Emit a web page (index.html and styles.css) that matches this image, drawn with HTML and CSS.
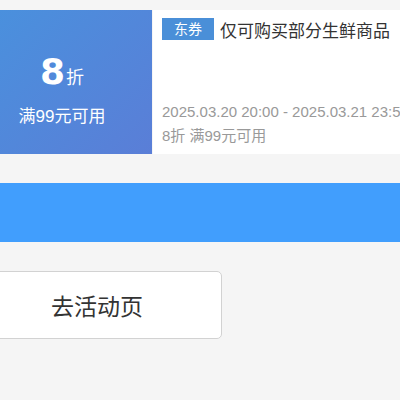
FILE: index.html
```html
<!DOCTYPE html>
<html lang="zh-CN">
<head>
  <meta charset="UTF-8">
  <meta name="viewport" content="width=device-width, initial-scale=1.0">
  <title>优惠券</title>
  <link rel="stylesheet" href="styles.css">
</head>
<body>
  <div class="coupon">
    <div class="coupon-left">
      <div class="coupon-value"><span class="num">8</span><span class="unit">折</span></div>
      <div class="coupon-limit">满99元可用</div>
    </div>
    <div class="coupon-right">
      <div class="coupon-title">
        <span class="tag">东券</span>
        <span class="title-text">仅可购买部分生鲜商品</span>
      </div>
      <div class="coupon-time">2025.03.20 20:00 - 2025.03.21 23:59</div>
      <div class="coupon-desc">8折 满99元可用</div>
    </div>
  </div>

  <div class="blue-bar"></div>

  <div class="action">
    <button class="action-btn">去活动页</button>
  </div>
</body>
</html>
```

FILE: styles.css
```css
body {
  margin: 0;
  background: #f5f5f5;
  font-family: 'Liberation Sans', 'Noto Sans CJK SC', sans-serif;
  overflow: hidden;
}

.coupon {
  display: flex;
  margin-top: 10px;
  height: 144px;
}

.coupon-left {
  width: 152px;
  flex-shrink: 0;
  box-sizing: border-box;
  padding: 16px 28px 0 0;
  background: linear-gradient(135deg, #4a90dd 0%, #5a7ed7 100%);
  color: #fff;
  display: flex;
  flex-direction: column;
  align-items: center;
  justify-content: center;
}

.coupon-value {
  display: flex;
  align-items: baseline;
}

.coupon-value .num {
  font-family: 'DejaVu Sans', sans-serif;
  font-weight: bold;
  font-size: 36px;
  line-height: 40px;
}

.coupon-value .unit {
  font-family: 'Noto Sans CJK SC', sans-serif;
  font-size: 18px;
  margin-left: 1px;
}

.coupon-limit {
  font-size: 17px;
  margin-top: 14px;
  line-height: 22px;
}

.coupon-right {
  flex: 1;
  margin-left: 1px;
  background: #fff;
  padding: 7px 0 0 9px;
  display: flex;
  flex-direction: column;
  white-space: nowrap;
  overflow: hidden;
}

.coupon-title {
  display: flex;
  align-items: center;
  height: 24px;
}

.tag {
  background: #4a8fd8;
  color: #fff;
  font-size: 14px;
  width: 52px;
  height: 22px;
  line-height: 22px;
  text-align: center;
  margin-right: 6px;
}

.title-text {
  color: #333;
  font-size: 17px;
}

.coupon-time {
  margin-top: 61px;
  color: #999;
  font-size: 15px;
  line-height: 20px;
}

.coupon-desc {
  margin-top: 4px;
  color: #999;
  font-size: 15px;
  line-height: 20px;
}

.blue-bar {
  margin-top: 29px;
  height: 59px;
  background: #419efd;
}

.action {
  margin-top: 29px;
}

.action-btn {
  display: block;
  margin-left: -28px;
  width: 250px;
  height: 68px;
  background: #fff;
  border: 1px solid #d2d2d2;
  border-radius: 5px;
  color: #333;
  font-family: 'Noto Sans CJK SC', sans-serif;
  font-size: 23px;
  padding: 0;
}
```
